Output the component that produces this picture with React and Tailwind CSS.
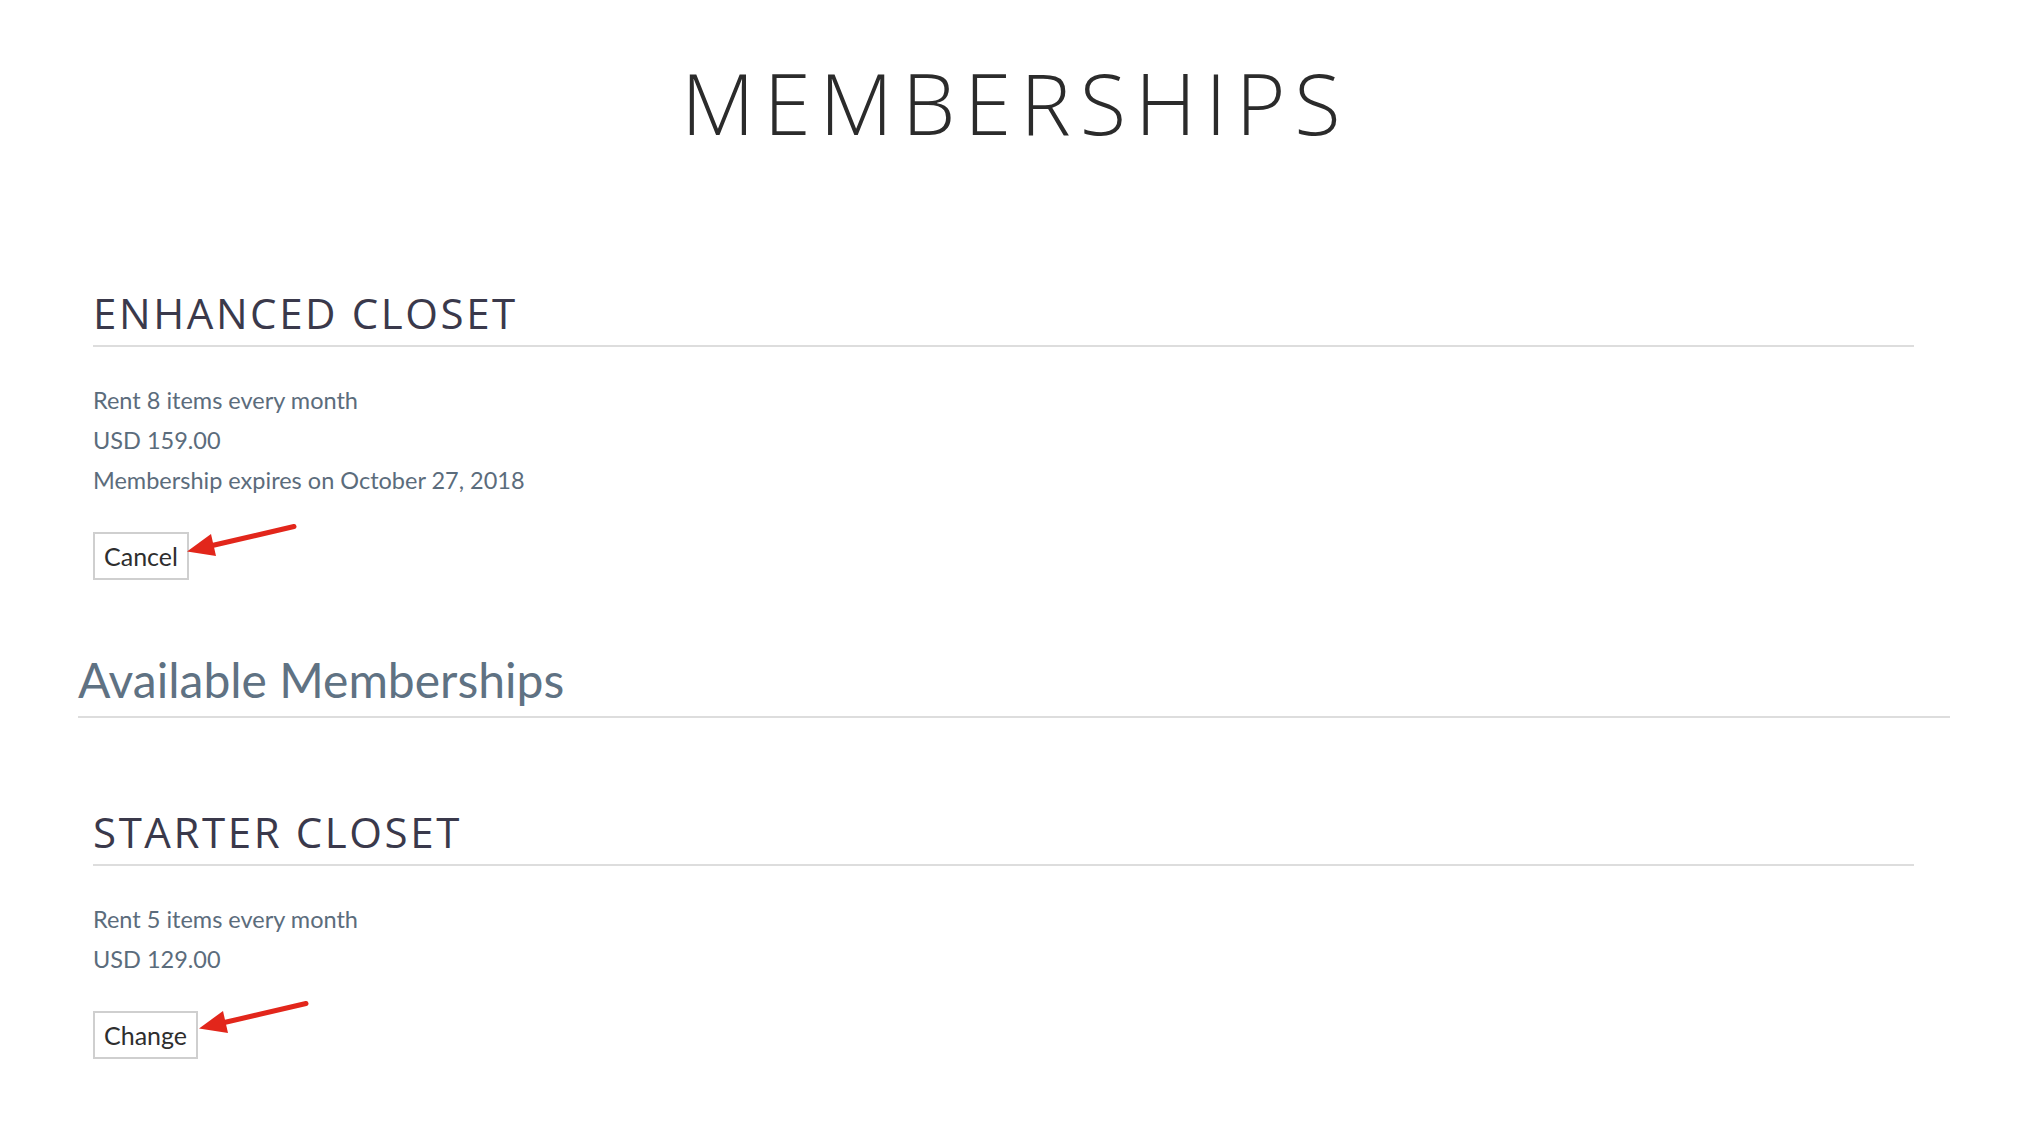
import React from "react";

const headFont = { fontFamily: '"Open Sans", "DejaVu Sans", sans-serif' };

function Arrow({ className }) {
  // red annotation arrow pointing left at the button
  return (
    <svg
      className={className}
      width="120"
      height="40"
      viewBox="0 0 120 40"
      fill="none"
    >
      <line x1="24" y1="26.3" x2="109" y2="6.5" stroke="#e2261b" strokeWidth="5" strokeLinecap="round" />
      <polygon points="2,31.5 31,36 26,14" fill="#e2261b" />
    </svg>
  );
}

function MembershipCard({ title, lines, action, arrowClass }) {
  return (
    <div className="ml-[15px] w-[1821px]">
      <div className="pb-[11px] border-b-2 border-[#dddddd]">
        <h2
          style={headFont}
          className="text-[42px] leading-none font-normal tracking-[2.6px] text-[#3a394b]"
        >
          {title}
        </h2>
      </div>
      <div className="mt-[33px] text-[23.5px] leading-[40px] text-[#5b6c7c] font-['Lato',sans-serif]">
        {lines.map((l) => (
          <div key={l}>{l}</div>
        ))}
      </div>
      <div className="relative mt-[32px] inline-block">
        <button className="h-[48px] px-[9px] border-2 border-[#cfcfcf] bg-white text-[25px] text-[#2e2e2e] font-['Lato',sans-serif] leading-none">
          {action}
        </button>
        <Arrow className={arrowClass} />
      </div>
    </div>
  );
}

export default function App() {
  return (
    <div className="w-[2022px] min-h-[1146px] bg-white">
      <h1
        style={headFont}
        className="pt-[60px] pl-[9px] text-center text-[85px] leading-none font-light tracking-[9px] text-[#2b2b2b]"
      >
        MEMBERSHIPS
      </h1>

      <div className="ml-[78px] w-[1872px]">
        <div className="mt-[147px]">
          <MembershipCard
            title="ENHANCED CLOSET"
            lines={[
              "Rent 8 items every month",
              "USD 159.00",
              "Membership expires on October 27, 2018",
            ]}
            action="Cancel"
            arrowClass="absolute left-[92px] top-[-12px]"
          />
        </div>

        <div className="mt-[76px] pb-[12px] border-b-2 border-[#dddddd]">
          <h2 className="text-[48px] leading-none text-[#5f7283] font-['Lato',sans-serif]">
            Available Memberships
          </h2>
        </div>

        <div className="mt-[93px]">
          <MembershipCard
            title="STARTER CLOSET"
            lines={["Rent 5 items every month", "USD 129.00"]}
            action="Change"
            arrowClass="absolute left-[104px] top-[-14px]"
          />
        </div>
      </div>
    </div>
  );
}
